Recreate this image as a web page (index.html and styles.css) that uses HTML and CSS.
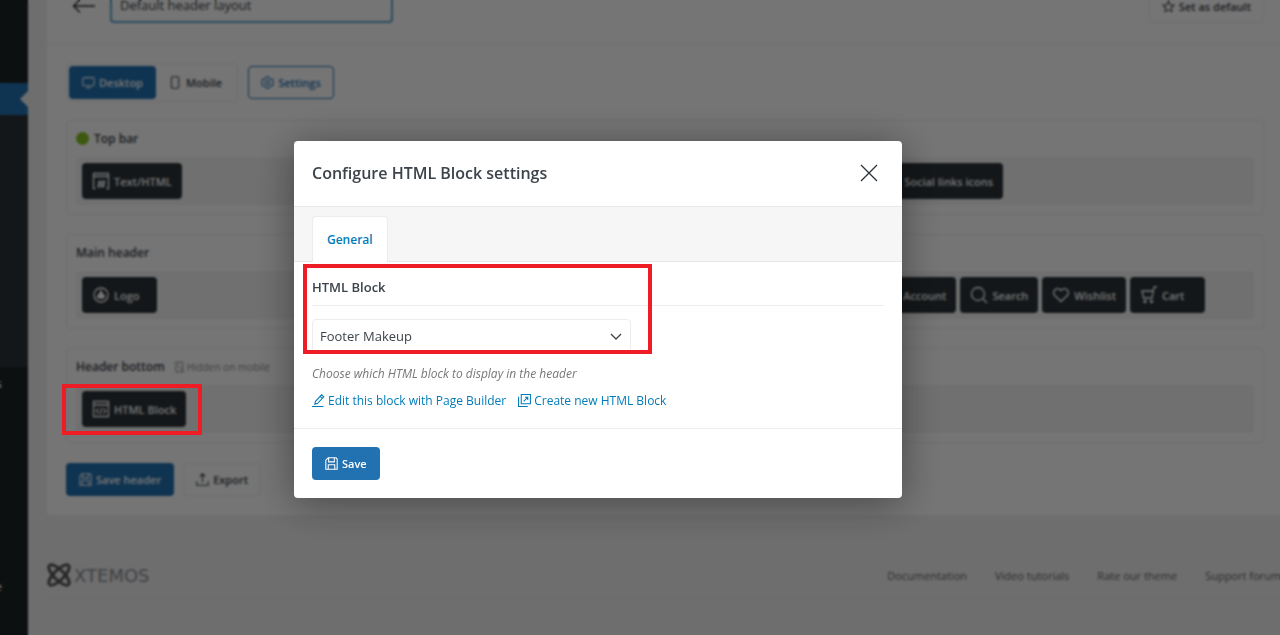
FILE: index.html
```html
<!DOCTYPE html>
<html lang="en">
  <head>
    <meta charset="UTF-8" />
    <meta name="viewport" content="width=device-width, initial-scale=1.0" />
    <title>Header builder</title>
    <link rel="stylesheet" href="styles.css">
  </head>
  <body>
    <div class="admin">
      <nav class="sidebar">
        <div class="menu-top"></div>
        <div class="menu-current"></div>
        <div class="submenu"></div>
        <div class="menu-rest">
          <a href="#">Tools</a>
          <a href="#">Theme</a>
        </div>
      </nav>

      <div class="page">
        <main class="panel">
          <div class="panel-header">
            <a href="#" class="back" aria-label="Back">
              <svg width="24" height="16" viewBox="0 0 24 16"><path d="M8 1.500 1.500 8 8 14.500M1.500 8H23" /></svg>
            </a>
            <input class="layout-name" type="text" value="Default header layout" aria-label="Layout name" />
            <button class="btn btn-light set-default">
              <svg width="13" height="13" viewBox="0 0 16 16"><path d="M8 1.500l2 4.300 4.700.6-3.400 3.200.9 4.700L8 12l-4.200 2.300.9-4.700L1.300 6.400 6 5.800z" /></svg>
              Set as default
            </button>
          </div>

          <div class="toolbar">
            <div class="device-switch">
              <button class="btn btn-primary">
                <svg width="13" height="13" viewBox="0 0 16 16"><rect x="1" y="2" width="14" height="10" rx="2" /><path d="M5 14.500h6" /></svg>
                Desktop
              </button>
              <button class="btn btn-plain">
                <svg width="13" height="13" viewBox="0 0 16 16"><rect x="3" y="1" width="9" height="14" rx="1.500" /></svg>
                Mobile
              </button>
            </div>
            <button class="btn btn-outline">
              <svg width="13" height="13" viewBox="0 0 16 16"><path d="M6.500 1h3l.6 2 1.700 1 2-.5 1.500 2.600L14 8l1.300 1.900-1.500 2.600-2-.5-1.700 1-.6 2h-3l-.6-2-1.700-1-2 .5L.7 9.900 2 8 .7 6.100l1.500-2.600 2 .5 1.700-1z" /><circle cx="8" cy="8" r="2.500" /></svg>
              Settings
            </button>
          </div>

          <section class="row">
            <h3><span class="dot"></span>Top bar</h3>
            <div class="row-inner">
              <button class="chip">
                <svg width="18" height="18" viewBox="0 0 18 18"><path d="M3.500 16.500h-2v-15h15v15h-2M1.500 4.500h15M8.500 8l-1.500 8M12 8l-1.500 8M5.500 10.500h8M5 13.500h8" /></svg>
                Text/HTML
              </button>
              <div class="chips-right top-right">
                <button class="chip">
                  <svg width="18" height="18" viewBox="0 0 18 18"><circle cx="4" cy="9" r="2" /><circle cx="14" cy="4" r="2" /><circle cx="14" cy="14" r="2" /><path d="M6 8l6-3M6 10l6 3" /></svg>
                  Social links icons
                </button>
              </div>
            </div>
          </section>

          <section class="row">
            <h3>Main header</h3>
            <div class="row-inner">
              <button class="chip chip-short">
                <svg width="18" height="18" viewBox="0 0 18 18"><circle cx="9" cy="9" r="7" /><path class="solid" d="M9 5l1.500 3 2 2-1 2H6.500l-1-2 2-2z" /></svg>
                Logo
              </button>
              <div class="chips-right main-right">
                <button class="chip">
                  <svg width="18" height="18" viewBox="0 0 18 18"><circle cx="9" cy="5" r="3" /><path d="M2 16c0-8 14-8 14 0z" /></svg>
                  Account
                </button>
                <button class="chip">
                  <svg width="18" height="18" viewBox="0 0 18 18"><circle cx="8" cy="8" r="6.500" /><path d="M13 13l4 4" /></svg>
                  Search
                </button>
                <button class="chip">
                  <svg width="18" height="18" viewBox="0 0 18 18"><path d="M9 15.500 2.700 9.500C-.8 5.500 5 0 9 4.500c4-4.500 9.800 1 6.300 5z" /></svg>
                  Wishlist
                </button>
                <button class="chip chip-short">
                  <svg width="18" height="18" viewBox="0 0 18 18"><path d="M17 1h-3l-2 11H3.500L2 5h11" /><circle cx="5" cy="15.500" r="1" /><circle cx="11.500" cy="15.500" r="1" /></svg>
                  Cart
                </button>
              </div>
            </div>
          </section>

          <section class="row">
            <h3>
              Header bottom
              <small>
                <svg width="12" height="12" viewBox="0 0 16 16"><path d="M4 5v9.500h9V6M4 1.500h9V6M2 1l13 14" /></svg>
                Hidden on mobile
              </small>
            </h3>
            <div class="row-inner">
              <button class="chip">
                <svg width="18" height="18" viewBox="0 0 18 18"><path d="M1.500 1.500h15v15h-15zM1.500 5h15M6.500 8.500l-2.500 2.500 2.500 2.500M11.500 8.500l2.500 2.500-2.500 2.500M9.800 8l-1.600 6" /></svg>
                HTML Block
              </button>
            </div>
          </section>

          <div class="panel-actions">
            <button class="btn btn-primary">
              <svg width="13" height="13" viewBox="0 0 16 16"><path d="M4 1h9.500L15 2.500V15H1V4zM4.500 1v5h7V1M4 15V9.500h8V15" /></svg>
              Save header
            </button>
            <button class="btn btn-light">
              <svg width="13" height="13" viewBox="0 0 16 16"><path d="M1 10v5h14v-5M8 11.500V1M4.500 4.500 8 1l3.500 3.500" /></svg>
              Export
            </button>
          </div>
        </main>

        <footer class="footer">
          <a href="#" class="brand">
            <svg width="24" height="24" viewBox="0 0 24 24"><ellipse cx="12" cy="12" rx="13.500" ry="5" transform="rotate(45 12 12)" /><ellipse cx="12" cy="12" rx="13.500" ry="5" transform="rotate(-45 12 12)" /></svg>
            XTEMOS
          </a>
          <nav class="footer-links">
            <a href="#">Documentation</a>
            <a href="#">Video tutorials</a>
            <a href="#">Rate our theme</a>
            <a href="#">Support forum</a>
          </nav>
        </footer>
      </div>
    </div>

    <div class="overlay">
      <div class="modal" role="dialog" aria-labelledby="modalTitle">
        <div class="modal-header">
          <h2 id="modalTitle">Configure HTML Block settings</h2>
          <button class="close" aria-label="Close">
            <svg width="18" height="18" viewBox="0 0 18 18"><path d="M1 1l16 16M17 1 1 17" /></svg>
          </button>
        </div>
        <div class="tabs">
          <button class="tab">General</button>
        </div>
        <div class="modal-body">
          <label class="field-title" for="htmlBlock">HTML Block</label>
          <div class="select-wrap">
            <select id="htmlBlock">
              <option>Footer Makeup</option>
            </select>
            <svg class="chevron" width="12" height="8" viewBox="0 0 12 8"><path d="M1 1l5 5 5-5" /></svg>
          </div>
          <p class="hint">Choose which HTML block to display in the header</p>
          <div class="block-links">
            <a href="#">
              <svg width="13" height="13" viewBox="0 0 16 16"><path d="M0 15.500h14M3.500 12.500l.8-3.500 7.500-8 2.700 2.500-7.500 8zM10 3l2.500 2.500" /></svg>
              Edit this block with Page Builder
            </a>
            <a href="#">
              <svg width="13" height="13" viewBox="0 0 16 16"><path d="M4 .7h11.300V12H4zM.7 3.500v11.800H12M7 9l5-5M8.500 4H12v3.500" /></svg>
              Create new HTML Block
            </a>
          </div>
          <div class="field-mark"></div>
        </div>
        <div class="modal-footer">
          <button class="btn btn-primary">
            <svg width="13" height="13" viewBox="0 0 16 16"><path d="M4 1h9.500L15 2.500V15H1V4zM4.500 1v5h7V1M4 15V9.500h8V15" /></svg>
            Save
          </button>
        </div>
      </div>
    </div>
    <div class="chip-mark"></div>
  </body>
</html>
```

FILE: styles.css
```css
* {
  box-sizing: border-box;
}
body {
  margin: 0;
  height: 100vh;
  overflow: hidden;
  font-family: "Segoe UI", "Open Sans", "Noto Sans", sans-serif;
  font-size: 12px;
  color: #3c434a;
  background-color: #f0f0f1;
}
button,
input,
select {
  font-family: inherit;
  margin: 0;
}
h2,
h3,
p {
  margin: 0;
}
a {
  text-decoration: none;
}
svg {
  flex: none;
  fill: none;
  stroke: currentColor;
  stroke-width: 1.3;
}
.solid {
  fill: currentColor;
}
.admin {
  display: flex;
  height: 100%;
}

/* Sidebar */
.sidebar {
  display: flex;
  flex-direction: column;
  flex: none;
  width: 28px;
  overflow: hidden;
  background-color: #1d2327;
}
.menu-top {
  height: 83px;
}
.menu-current {
  display: flex;
  align-items: center;
  justify-content: flex-end;
  height: 32px;
  background-color: #2271b1;
}
.menu-current::after {
  content: "";
  border: 8px solid transparent;
  border-left: 0;
  border-right-color: #f0f0f1;
}
.submenu {
  height: 252px;
  background-color: #2c3338;
}
.menu-rest {
  display: flex;
  flex-direction: column;
  align-items: flex-end;
  gap: 186px;
  width: 28px;
  padding: 8px 26px 0 0;
}
.menu-rest a {
  color: #f0f0f1;
  line-height: 17px;
}

/* Page */
.page {
  flex: 1;
  min-width: 0;
  padding-left: 19px;
  overflow: hidden;
}
.panel {
  padding-bottom: 19px;
  background-color: #fff;
  border-radius: 0 0 0 4px;
}
.panel-header {
  display: flex;
  align-items: flex-end;
  height: 45px;
  padding: 0 16px 21px 25px;
  border-bottom: 1px solid #ececec;
}
.back {
  height: 25px;
  margin-right: 14px;
  color: #23282d;
}
.layout-name {
  width: 283px;
  height: 37px;
  flex: none;
  padding: 0 8px;
  border: 2px solid #5fa8d0;
  border-radius: 4px;
  font-size: 13px;
  color: #3c434a;
}
.set-default {
  margin-left: auto;
}
.toolbar {
  display: flex;
  align-items: center;
  gap: 10px;
  padding: 18px 19px;
}
.device-switch {
  display: flex;
  padding: 2px;
  border: 1px solid #ececec;
  border-radius: 4px;
}
.btn {
  display: flex;
  align-items: center;
  justify-content: center;
  gap: 4px;
  height: 33px;
  padding: 0 12px;
  border: 1px solid transparent;
  border-radius: 4px;
  font-size: 11px;
  font-weight: 600;
  white-space: nowrap;
  cursor: pointer;
}
.btn-primary {
  color: #fff;
  background-color: #2271b1;
}
.btn-plain,
.btn-light {
  color: #3c434a;
  background-color: #fff;
}
.btn-light {
  border-color: #ececec;
}
.btn-outline {
  color: #2271b1;
  border-color: #2271b1;
  background-color: #fff;
}
.row {
  margin: 0 16px 19px 19px;
  padding: 9px;
  border: 1px solid #ececec;
  border-radius: 4px;
}
.row h3 {
  display: flex;
  align-items: center;
  height: 17px;
  margin-bottom: 10px;
  font-size: 12px;
  font-weight: 600;
}
.row small {
  display: flex;
  align-items: center;
  gap: 2px;
  margin-left: 8px;
  font-size: 10px;
  font-weight: 400;
  color: #8c8f94;
}
.dot {
  width: 13px;
  height: 13px;
  margin-right: 5px;
  border-radius: 50%;
  background-color: #85c220;
}
.row-inner {
  display: flex;
  padding: 6px;
  border-radius: 4px;
  background-color: #f4f4f4;
}
.chips-right {
  display: flex;
  gap: 4px;
  margin-left: auto;
}
.top-right {
  padding-right: 245px;
}
.main-right {
  padding-right: 43px;
}
.chip {
  display: flex;
  align-items: center;
  gap: 4px;
  height: 36px;
  padding: 0 10px;
  border: 0;
  border-radius: 4px;
  font-size: 11px;
  font-weight: 600;
  white-space: nowrap;
  color: #fff;
  background-color: #2c3338;
}
.chip-short {
  min-width: 75px;
}
.panel-actions {
  display: flex;
  gap: 9px;
  padding: 1px 19px 0;
}

/* Footer */
.footer {
  display: flex;
  align-items: center;
  justify-content: space-between;
  margin-top: 37px;
  padding: 11px 0;
  border-bottom: 1px solid #e2e2e2;
}
.brand {
  display: flex;
  align-items: center;
  gap: 3px;
  font-family: "DejaVu Sans", sans-serif;
  font-size: 18px;
  color: #8c8f94;
}
.brand svg {
  stroke: #555;
  stroke-width: 3;
}
.footer-links {
  display: flex;
  gap: 28px;
  margin-right: -1px;
}
.footer-links a {
  font-size: 11px;
  font-weight: 500;
  color: #666;
}

/* Modal */
.overlay {
  position: fixed;
  inset: 0;
  display: flex;
  justify-content: center;
  align-items: center;
  padding: 3px 84px 0 0;
  background-color: rgba(0, 0, 0, 0.54);
  backdrop-filter: blur(1px);
}
.modal {
  width: 608px;
  border-radius: 4px;
  background-color: #fff;
  box-shadow: 0 5px 40px rgba(0, 0, 0, 0.4);
}
.modal-header {
  display: flex;
  align-items: center;
  justify-content: space-between;
  height: 65px;
  padding: 0 24px 0 18px;
}
.modal-header h2 {
  font-size: 16px;
  font-weight: 600;
}
.close {
  display: flex;
  padding: 0;
  border: 0;
  background: none;
  color: #2c3338;
}
.tabs {
  display: flex;
  align-items: flex-end;
  height: 56px;
  padding: 0 18px;
  border-top: 1px solid #e8e8e8;
  border-bottom: 1px solid #e8e8e8;
  background-color: #f6f6f6;
}
.tab {
  height: 46px;
  margin-bottom: -1px;
  padding: 0 14px;
  border: 1px solid #ececec;
  border-bottom: 0;
  border-radius: 4px 4px 0 0;
  font-size: 12px;
  font-weight: 600;
  color: #007cba;
  background-color: #fff;
}
.modal-body {
  position: relative;
  padding: 12px 18px 18px;
}
.field-title {
  display: block;
  padding: 3px 0 8px;
  border-bottom: 1px solid #ececec;
  font-size: 13px;
  font-weight: 600;
  line-height: 20px;
}
.select-wrap {
  position: relative;
  width: 319px;
  margin-top: 13px;
}
.select-wrap select {
  display: block;
  width: 100%;
  height: 34px;
  padding: 0 7px;
  appearance: none;
  border: 1px solid #ececec;
  border-radius: 4px;
  font-size: 13px;
  color: #3c434a;
  background-color: #fff;
}
.chevron {
  position: absolute;
  top: 14px;
  right: 9px;
}
.hint {
  margin-top: 12px;
  font-size: 12px;
  font-style: italic;
  line-height: 18px;
  color: #777;
}
.block-links {
  display: flex;
  gap: 12px;
  margin-top: 9px;
}
.block-links a {
  display: flex;
  align-items: center;
  gap: 3px;
  line-height: 18px;
  color: #007cba;
}
.modal-footer {
  display: flex;
  padding: 18px;
  border-top: 1px solid #ececec;
}

/* Highlight frames */
.field-mark,
.chip-mark {
  position: absolute;
  border: 4px solid #ee1c25;
}
.field-mark {
  top: 2px;
  left: 9px;
  width: 349px;
  height: 90px;
}
.chip-mark {
  top: 384px;
  left: 62px;
  width: 140px;
  height: 51px;
}
```
